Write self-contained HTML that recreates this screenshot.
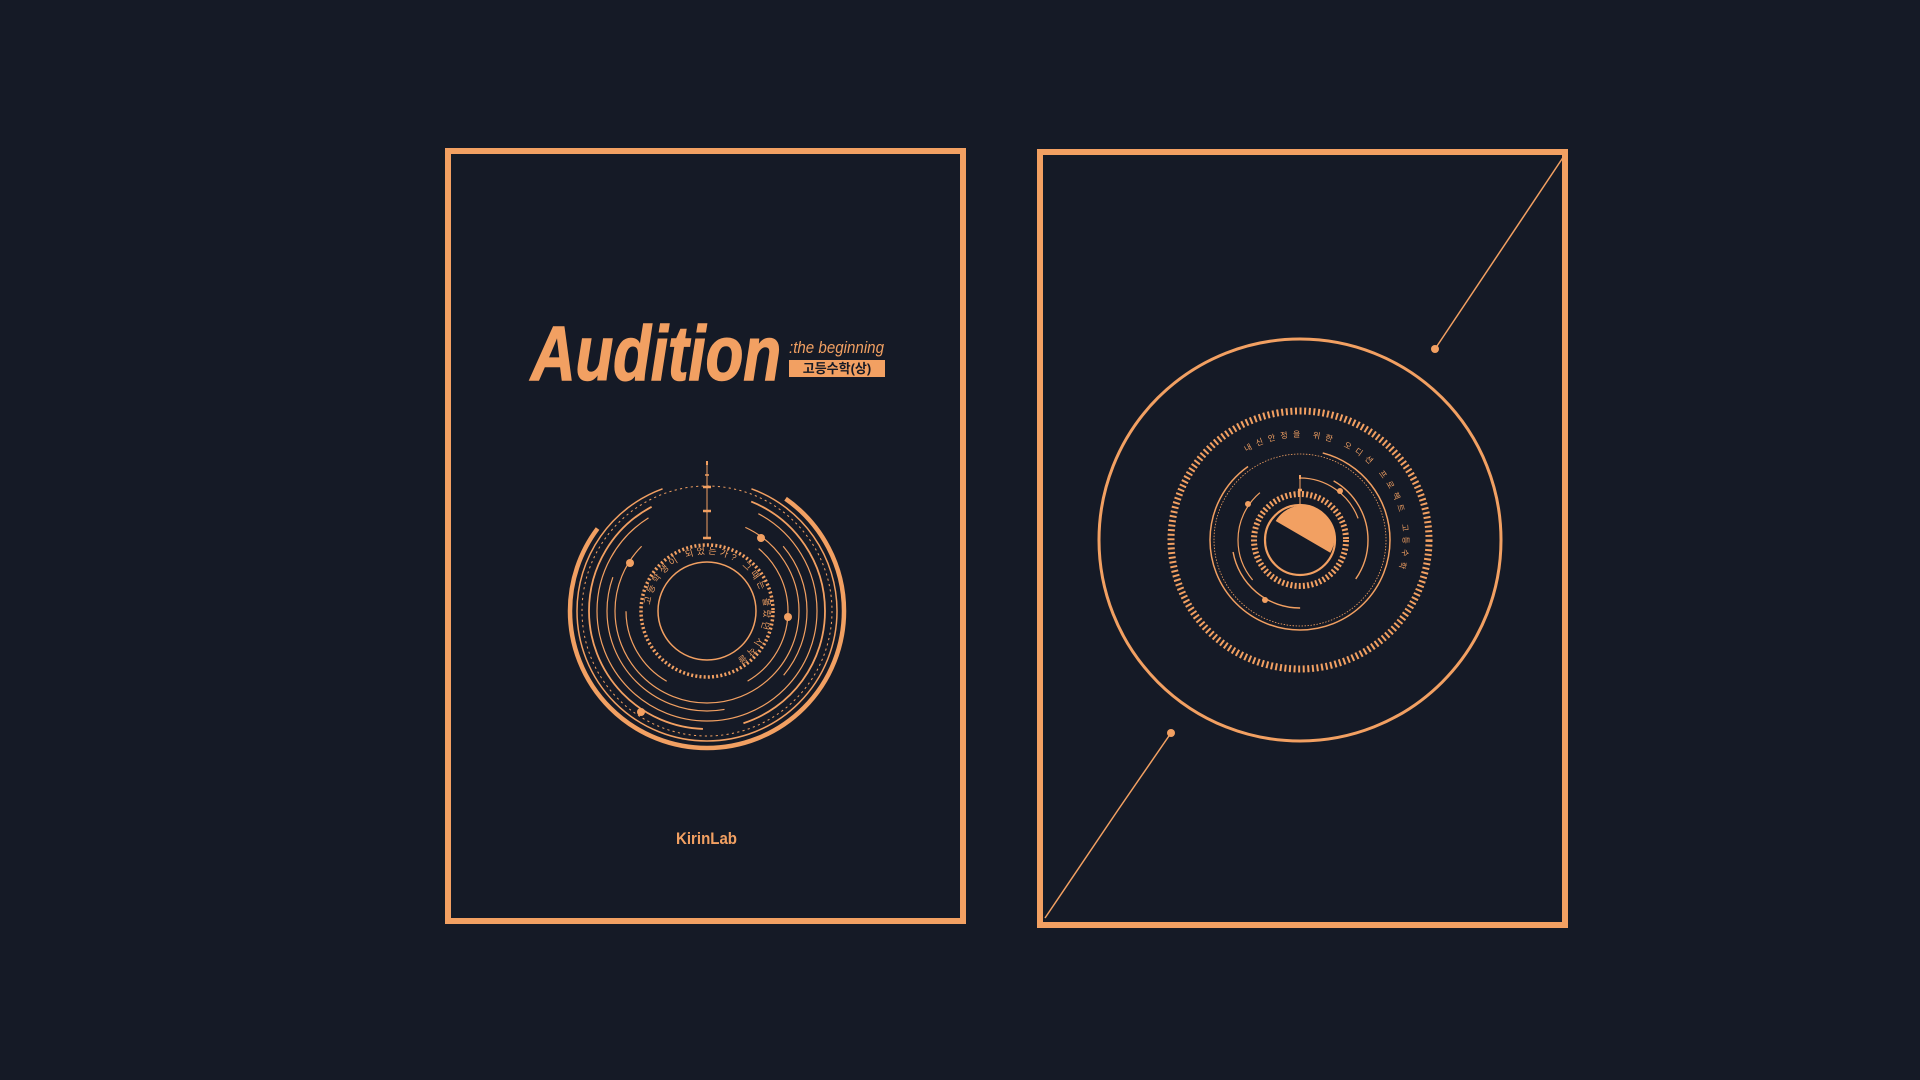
<!DOCTYPE html>
<html><head><meta charset="utf-8"><style>
html,body{margin:0;padding:0;background:#151a26;width:1920px;height:1080px;overflow:hidden}
svg{display:block}
</style></head><body>
<svg width="1920" height="1080" viewBox="0 0 1920 1080" xmlns="http://www.w3.org/2000/svg">
<rect width="1920" height="1080" fill="#151a26"/>
<g fill="none" stroke="#f2a062">
<rect x="448" y="151" width="515" height="770" stroke-width="6"/>
<rect x="1040" y="152" width="525" height="773" stroke-width="6"/>
<line x1="1435" y1="349" x2="1564" y2="156" stroke-width="1.5"/>
<polyline points="1171,733 1118,810 1045,918" stroke-width="1.5"/>
</g>
<circle cx="1435" cy="349" r="4" fill="#f2a062"/>
<circle cx="1171" cy="733" r="4" fill="#f2a062"/>

<text x="531" y="380" font-family="Liberation Sans, sans-serif" font-weight="bold" font-style="italic" font-size="77" fill="#f2a062" stroke="#f2a062" stroke-width="1.5" textLength="250" lengthAdjust="spacingAndGlyphs">Audition</text>
<text x="789" y="353" font-family="Liberation Sans, sans-serif" font-style="italic" font-size="17" fill="#f2a062" textLength="95" lengthAdjust="spacingAndGlyphs">:the beginning</text>
<rect x="789" y="360" width="96" height="17" fill="#f2a062"/>
<text x="837" y="373" text-anchor="middle" font-family="Liberation Sans, 'Noto Sans CJK KR', sans-serif" font-weight="bold" font-size="13" fill="#151a26">고등수학(상)</text>
<text x="676" y="844" font-family="Liberation Sans, sans-serif" font-weight="bold" font-size="17" fill="#f2a062" textLength="61" lengthAdjust="spacingAndGlyphs">KirinLab</text>

<g transform="translate(707,611)" fill="none" stroke="#f2a062">
<circle r="49" stroke-width="1.5"/>
<circle r="66" stroke-width="3.5" stroke-dasharray="2 2.2"/>
<circle r="137" pathLength="360" stroke-width="4.5" stroke-dasharray="272 88" stroke-dashoffset="55"/>
<circle r="130" pathLength="360" stroke-width="1.5" stroke-dasharray="320 40" stroke-dashoffset="70"/>
<circle r="125" pathLength="360" stroke-width="1" stroke-dasharray="1 1.5"/>
<circle r="118" pathLength="360" stroke-width="1.8" stroke-dasharray="140 20 150 50" stroke-dashoffset="68"/>
<circle r="110" pathLength="360" stroke-width="1.2" stroke-dasharray="300 60" stroke-dashoffset="62"/>
<circle r="100" pathLength="360" stroke-width="1.2" stroke-dasharray="80 40 120 120" stroke-dashoffset="40"/>
<circle r="92" pathLength="360" stroke-width="1.2" stroke-dasharray="290 70" stroke-dashoffset="65"/>
<circle r="81" pathLength="360" stroke-width="1.2" stroke-dasharray="110 60 60 130" stroke-dashoffset="50"/>
<line x1="0" y1="-150" x2="0" y2="-72" stroke-width="1"/>
<line x1="-4" y1="-124" x2="4" y2="-124" stroke-width="2.5"/>
<line x1="-4" y1="-100" x2="4" y2="-100" stroke-width="2.5"/>
<line x1="-4" y1="-73" x2="4" y2="-73" stroke-width="2.5"/>
<line x1="-2" y1="-136" x2="2" y2="-136" stroke-width="1.5"/>
<line x1="0" y1="-150" x2="0" y2="-146" stroke-width="2"/>
</g>
<g fill="#f2a062">
<circle cx="630" cy="563" r="4"/><circle cx="761" cy="538" r="4"/>
<circle cx="788" cy="617" r="4"/><circle cx="641" cy="712" r="4"/>
</g>
<defs>
<path id="lt" d="M 650,611 A 57,57 0 1 1 764,611 A 57,57 0 1 1 650,611"/>
<path id="rt" d="M 1197,540 A 103,103 0 1 1 1403,540 A 103,103 0 1 1 1197,540"/>
</defs>
<text font-family="Liberation Sans, 'Noto Sans CJK KR', sans-serif" font-size="9" fill="#f2a062" letter-spacing="3"><textPath href="#lt" startOffset="6">고등학생이 되었는가? 그때는 몰랐던 시작을</textPath></text>

<g transform="translate(1300,540)" fill="none" stroke="#f2a062">
<circle r="201" stroke-width="3"/>
<circle r="129" stroke-width="7" stroke-dasharray="2 2.6"/>
<circle r="90" pathLength="360" stroke-width="1.5" stroke-dasharray="310 50" stroke-dashoffset="75"/>
<circle r="86" stroke-width="0.8" stroke-dasharray="1.5 1.5"/>
<circle r="68" pathLength="360" stroke-width="1.4" stroke-dasharray="95 55 80 130" stroke-dashoffset="60"/>
<circle r="62" pathLength="360" stroke-width="1.2" stroke-dasharray="90 40 70 160" stroke-dashoffset="-140"/>
<circle r="46" stroke-width="6" stroke-dasharray="2 2.2"/>
<circle r="35" stroke-width="2.2"/>
<line x1="0" y1="-65" x2="0" y2="-22" stroke-width="1"/>
<line x1="-2" y1="-50" x2="2" y2="-50" stroke-width="2.5"/>
<line x1="0" y1="-65" x2="0" y2="-61" stroke-width="2"/>
</g>
<path d="M 1272.7,524 A 31.5,31.5 0 0 1 1327.3,555.8 Z" fill="#f2a062" transform="translate(3,-3)"/>
<g fill="#f2a062">
<circle cx="1248" cy="504" r="3"/><circle cx="1340" cy="491" r="3"/><circle cx="1265" cy="600" r="3"/>
</g>
<text font-family="Liberation Sans, 'Noto Sans CJK KR', sans-serif" font-size="8" fill="#f2a062" letter-spacing="5"><textPath href="#rt" startOffset="105">내신안정을 위한 오디션 프로젝트 고등수학</textPath></text>
</svg>
</body></html>
